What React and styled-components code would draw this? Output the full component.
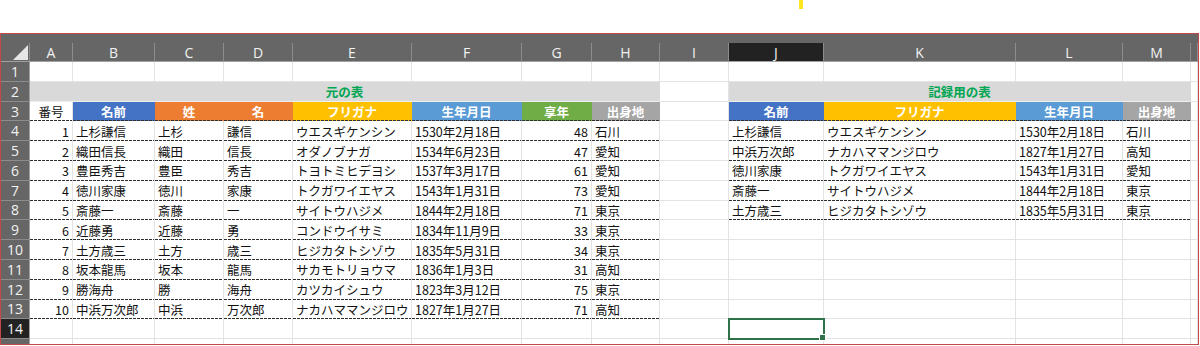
import React from "react";
import styled, { createGlobalStyle } from "styled-components";

const GlobalStyle = createGlobalStyle`
  html, body {
    margin: 0;
    padding: 0;
    background: #ffffff;
  }
  body {
    font-family: "Noto Sans CJK JP", "Noto Sans", sans-serif;
  }
`;

// column letter + width in px (last one is the cut-off column N)
const COLS = [
  ["A", 43], ["B", 82], ["C", 69], ["D", 69], ["E", 119], ["F", 110], ["G", 70],
  ["H", 68], ["I", 69], ["J", 95], ["K", 192], ["L", 107], ["M", 68], ["", 7],
];

const FILL = {
  blue: "#4472c4",
  orange: "#ed7d31",
  gold: "#ffc000",
  sky: "#5b9bd5",
  green: "#70ad47",
  grey: "#a5a5a5",
  band: "#d9d9d9",
};

const LEFT = [
  [1, "上杉謙信", "上杉", "謙信", "ウエスギケンシン", "1530年2月18日", 48, "石川"],
  [2, "織田信長", "織田", "信長", "オダノブナガ", "1534年6月23日", 47, "愛知"],
  [3, "豊臣秀吉", "豊臣", "秀吉", "トヨトミヒデヨシ", "1537年3月17日", 61, "愛知"],
  [4, "徳川家康", "徳川", "家康", "トクガワイエヤス", "1543年1月31日", 73, "愛知"],
  [5, "斎藤一", "斎藤", "一", "サイトウハジメ", "1844年2月18日", 71, "東京"],
  [6, "近藤勇", "近藤", "勇", "コンドウイサミ", "1834年11月9日", 33, "東京"],
  [7, "土方歳三", "土方", "歳三", "ヒジカタトシゾウ", "1835年5月31日", 34, "東京"],
  [8, "坂本龍馬", "坂本", "龍馬", "サカモトリョウマ", "1836年1月3日", 31, "高知"],
  [9, "勝海舟", "勝", "海舟", "カツカイシュウ", "1823年3月12日", 75, "東京"],
  [10, "中浜万次郎", "中浜", "万次郎", "ナカハママンジロウ", "1827年1月27日", 71, "高知"],
];

const RIGHT = [
  ["上杉謙信", "ウエスギケンシン", "1530年2月18日", "石川"],
  ["中浜万次郎", "ナカハママンジロウ", "1827年1月27日", "高知"],
  ["徳川家康", "トクガワイエヤス", "1543年1月31日", "愛知"],
  ["斎藤一", "サイトウハジメ", "1844年2月18日", "東京"],
  ["土方歳三", "ヒジカタトシゾウ", "1835年5月31日", "東京"],
];

const HEAD_LEFT = [
  ["名前", "blue"], ["姓", "orange"], ["名", "orange"], ["フリガナ", "gold"],
  ["生年月日", "sky"], ["享年", "green"], ["出身地", "grey"],
];
const HEAD_RIGHT = [["名前", "blue"], ["フリガナ", "gold"], ["生年月日", "sky"], ["出身地", "grey"]];

const Page = styled.div`
  width: 1200px;
  height: 346px;
  overflow: hidden;
`;

const TopStrip = styled.div`
  height: 33px;
  padding-left: 799px;
  box-sizing: border-box;
`;

const Marker = styled.div`
  width: 4px;
  height: 9px;
  background: #ffe61c;
`;

const Frame = styled.div`
  width: 1199px;
  height: 312px;
  box-sizing: border-box;
  border: 1px solid #c44a4a;
  overflow: hidden;
`;

const Ribbon = styled.div`
  height: 9px;
  background: #666666;
`;

const Sheet = styled.div`
  display: grid;
  grid-template-columns: 29px ${COLS.map((c) => c[1] + "px").join(" ")};
  grid-template-rows: 19px;
  grid-auto-rows: 19.8px;
`;

const Corner = styled.div`
  background: #666666;
  border-right: 1px solid #8c8c8c;
  border-bottom: 1px solid #a0a0a0;
  box-sizing: border-box;
  display: flex;
  svg {
    display: block;
  }
`;

const ColHead = styled.div`
  background: ${(p) => (p.$active ? "#222222" : "#666666")};
  color: #f2f2f2;
  font-family: "Open Sans", "Liberation Sans", sans-serif;
  font-size: 14px;
  display: flex;
  align-items: center;
  justify-content: center;
  box-sizing: border-box;
  border-right: 1px solid #8c8c8c;
  border-bottom: 1px solid #a0a0a0;
  min-width: 0;
  overflow: hidden;
`;

const RowHead = styled.div`
  background: ${(p) => (p.$active ? "#222222" : "#666666")};
  color: #f2f2f2;
  font-family: "Open Sans", "Liberation Sans", sans-serif;
  font-size: 14px;
  display: flex;
  align-items: center;
  justify-content: center;
  box-sizing: border-box;
  border-right: 1px solid #a0a0a0;
  border-bottom: 1px solid #8c8c8c;
`;

const ALIGN = { left: "flex-start", center: "center", right: "flex-end" };

const Cell = styled.div`
  grid-column: span ${(p) => p.$span || 1};
  position: relative;
  z-index: ${(p) => (p.$selected ? 2 : "auto")};
  min-width: 0;
  display: flex;
  align-items: center;
  justify-content: ${(p) => ALIGN[p.$align || "left"]};
  padding: 0 3px;
  box-sizing: border-box;
  white-space: nowrap;
  font-size: 12.5px;
  color: ${(p) => p.$color || "#111111"};
  font-weight: ${(p) => (p.$bold ? 700 : 400)};
  background-color: ${(p) => p.$fill || "#ffffff"};
  border-right: 1px solid ${(p) => p.$fill || "#e3e3e3"};
  border-bottom: ${(p) =>
    p.$dashed ? "none" : `1px solid ${p.$fill ? "#eeeeee" : "#e3e3e3"}`};
  background-image: ${(p) =>
    p.$dashed ? "linear-gradient(to right, #2e2e2e 3px, transparent 3px)" : "none"};
  background-size: 4px 1px;
  background-repeat: repeat-x;
  background-position: left bottom;
  outline: ${(p) => (p.$selected ? "2px solid #2f7249" : "none")};
  outline-offset: -1px;

  &::after {
    content: "";
    display: ${(p) => (p.$selected ? "block" : "none")};
    position: absolute;
    right: -3px;
    bottom: -3px;
    width: 5px;
    height: 5px;
    background: #2f7249;
    border: 1px solid #ffffff;
  }
`;

const blanks = (n, key) =>
  Array.from({ length: n }, (_, i) => <Cell key={key + i} />);

function Row({ n, active, children }) {
  return (
    <>
      <RowHead $active={active}>{n}</RowHead>
      {children}
    </>
  );
}

export default function App() {
  return (
    <Page>
      <GlobalStyle />
      <TopStrip>
        <Marker />
      </TopStrip>
      <Frame>
        <Ribbon />
        <Sheet>
          <Corner>
            <svg width="28" height="18" viewBox="0 0 28 18">
              <polygon points="12,17 27,17 27,2" fill="#e6e6e6" />
            </svg>
          </Corner>
          {COLS.map(([letter]) => (
            <ColHead key={"c" + letter} $active={letter === "J"}>
              {letter}
            </ColHead>
          ))}

          <Row n={1}>{blanks(14, "r1")}</Row>

          <Row n={2}>
            <Cell $span={8} $fill={FILL.band} $align="center" $bold $color="#00a651">
              元の表
            </Cell>
            <Cell />
            <Cell $span={4} $fill={FILL.band} $align="center" $bold $color="#00a651">
              記録用の表
            </Cell>
            <Cell />
          </Row>

          <Row n={3}>
            <Cell $align="center" $dashed>番号</Cell>
            {HEAD_LEFT.map(([t, c], i) => (
              <Cell key={"hl" + i} $fill={FILL[c]} $align="center" $bold $color="#ffffff" $dashed>
                {t}
              </Cell>
            ))}
            <Cell />
            {HEAD_RIGHT.map(([t, c], i) => (
              <Cell key={"hr" + i} $fill={FILL[c]} $align="center" $bold $color="#ffffff" $dashed>
                {t}
              </Cell>
            ))}
            <Cell />
          </Row>

          {LEFT.map((r, i) => {
            const right = RIGHT[i];
            return (
              <Row key={"d" + i} n={i + 4}>
                <Cell $align="right" $dashed>{r[0]}</Cell>
                <Cell $dashed>{r[1]}</Cell>
                <Cell $dashed>{r[2]}</Cell>
                <Cell $dashed>{r[3]}</Cell>
                <Cell $dashed>{r[4]}</Cell>
                <Cell $dashed>{r[5]}</Cell>
                <Cell $align="right" $dashed>{r[6]}</Cell>
                <Cell $dashed>{r[7]}</Cell>
                <Cell />
                {right
                  ? right.map((v, j) => (
                      <Cell key={"rv" + j} $dashed>{v}</Cell>
                    ))
                  : blanks(4, "rb" + i)}
                <Cell />
              </Row>
            );
          })}

          <Row n={14} active>
            {blanks(9, "r14a")}
            <Cell $selected />
            {blanks(4, "r14b")}
          </Row>

          <Row n={15}>{blanks(14, "r15")}</Row>
        </Sheet>
      </Frame>
    </Page>
  );
}
